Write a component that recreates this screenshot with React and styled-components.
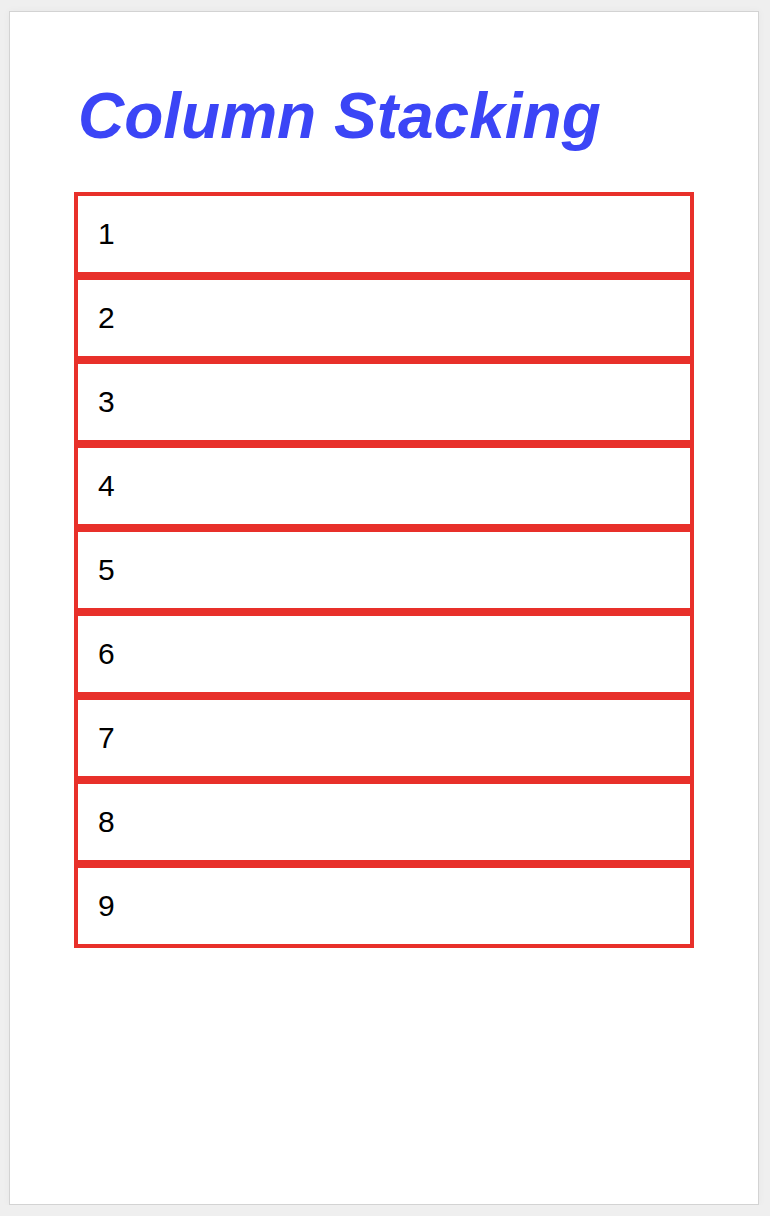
import React from 'react'
import styled, { createGlobalStyle } from 'styled-components'

const GlobalStyle = createGlobalStyle`
html, body {
    margin: 0;
    padding: 0;
    background: #efefef;
    font-family: "Liberation Sans", Arial, Helvetica, sans-serif;
}
`

const items = [1, 2, 3, 4, 5, 6, 7, 8, 9]

const App = () => {
    return (
        <>
            <GlobalStyle />
            <Card>
                <Title>Column Stacking</Title>
                <Stack>
                    {items.map((n) => (
                        <Item key={n}>{n}</Item>
                    ))}
                </Stack>
            </Card>
        </>
    )
}

const Card = styled.div`
box-sizing: border-box;
width: 750px;
height: 1194px;
margin: 11px 0 0 9px;
background: #ffffff;
border: 1px solid #d3d3d3;
box-shadow: 0 0 8px rgba(0, 0, 0, 0.04);
padding: 0 64px;
`

const Title = styled.h1`
margin: 0;
padding: 67px 0 0 4px;
height: 180px;
box-sizing: border-box;
font-size: 64px;
line-height: 74px;
font-weight: 700;
font-style: italic;
color: #3b45f6;
`

const Stack = styled.div`
display: flex;
flex-direction: column;
width: 620px;
`

const Item = styled.div`
box-sizing: border-box;
height: 84px;
display: flex;
align-items: center;
padding: 0 20px;
border: 4px solid #e8302a;
font-size: 30px;
color: #000;
`

export default App
